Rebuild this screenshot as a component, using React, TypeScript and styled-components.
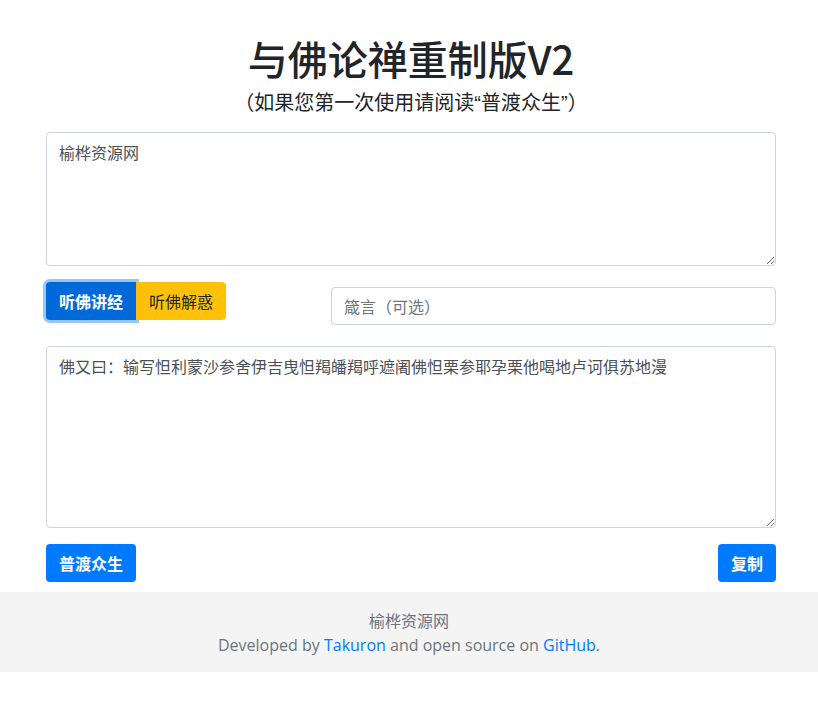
import React from "react";
import styled, { createGlobalStyle } from "styled-components";

const Global = createGlobalStyle`
  body { margin: 0; font-family: "Liberation Sans", "Noto Sans CJK SC", sans-serif; color: #212529; background: #fff; }
  * { box-sizing: border-box; }
`;
const Main = styled.div`width: 730px; margin: 0 0 0 46px; padding-top: 30px; display: flex; flex-direction: column;`;
const Title = styled.h1`margin: 0; text-align: center; font-size: 40px; font-weight: 500; line-height: 56px; font-family: "Noto Sans CJK SC", sans-serif;`;
const Sub = styled.p`margin: 2px 0 0; text-align: center; font-size: 20px; line-height: 30px;`;
const Area = styled.textarea<{ h: number }>`
  margin-top: ${p => (p.h > 150 ? 21 : 14)}px; width: 100%; height: ${p => p.h}px; resize: vertical;
  border: 1px solid #ced4da; border-radius: 4px; padding: 7px 12px; font-size: 16px; line-height: 24px;
  color: #495057; font-family: "Noto Sans CJK SC", sans-serif;
`;
const Row = styled.div`display: flex; justify-content: space-between; align-items: flex-start; margin-top: 16px;`;
const Group = styled.div`display: flex; width: 285px;`;
const Btn = styled.button<{ bg: string; fg: string; ring?: boolean; pos?: "l" | "r" | "a" }>`
  height: 38px; padding: 0 13px; border: none; font-size: 16px; font-family: "Noto Sans CJK SC", sans-serif;
  background: ${p => p.bg}; color: ${p => p.fg}; font-weight: ${p => (p.fg === "#fff" ? 600 : 400)};
  border-radius: ${p => (p.pos === "l" ? "4px 0 0 4px" : p.pos === "r" ? "0 4px 4px 0" : "4px")};
  box-shadow: ${p => (p.ring ? "0 0 0 3px rgba(38,143,255,.5)" : "none")};
`;
const Input = styled.input`
  margin-top: 5px; flex: 1; height: 38px; border: 1px solid #ced4da; border-radius: 4px; padding: 0 12px;
  font-size: 16px; font-family: "Noto Sans CJK SC", sans-serif; color: #495057;
  &::placeholder { color: #6c757d; }
`;
const Foot = styled.footer`margin-top: 10px; background: #f4f4f4; height: 80px; padding-top: 17px; text-align: center; color: #6c757d; font-size: 16px; line-height: 24px; font-family: "Open Sans", "Noto Sans CJK SC", sans-serif;`;
const Lnk = styled.a`color: #007bff; text-decoration: none;`;

export default function App() {
  return (
    <>
      <Global />
      <Main>
        <Title>与佛论禅重制版V2</Title>
        <Sub>（如果您第一次使用请阅读“普渡众生”）</Sub>
        <Area h={134} defaultValue="榆桦资源网" />
        <Row>
          <Group>
            <Btn bg="#0069d9" fg="#fff" ring pos="l">听佛讲经</Btn>
            <Btn bg="#ffc107" fg="#212529" pos="r">听佛解惑</Btn>
          </Group>
          <Input placeholder="箴言（可选）" />
        </Row>
        <Area h={182} defaultValue="佛又曰：输写怛利蒙沙参舍伊吉曳怛羯皤羯呼遮阇佛怛栗参耶孕栗他喝地卢诃俱苏地漫" />
        <Row>
          <Btn bg="#007bff" fg="#fff">普渡众生</Btn>
          <Btn bg="#007bff" fg="#fff">复制</Btn>
        </Row>
      </Main>
      <Foot>
        <div>榆桦资源网</div>
        <div>Developed by <Lnk href="#">Takuron</Lnk> and open source on <Lnk href="#">GitHub</Lnk>.</div>
      </Foot>
    </>
  );
}
